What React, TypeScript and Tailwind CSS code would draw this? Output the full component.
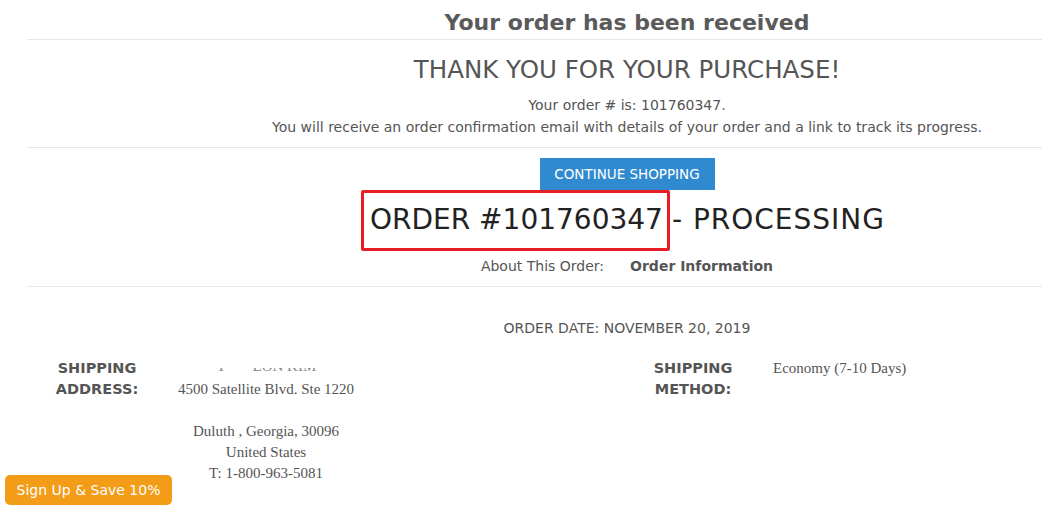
import React from "react";

const sans = { fontFamily: '"DejaVu Sans", Verdana, sans-serif' };
const serif = { fontFamily: '"Liberation Serif", Georgia, serif' };

function InfoRow({ label1, label2, children, labelWidth }: { label1: string; label2: string; children: React.ReactNode; labelWidth: string }) {
  return (
    <div className="flex items-start">
      <div className={`${labelWidth} text-center text-[14.5px] font-bold leading-[21px] text-[#555]`}>
        {label1}
        <br />
        {label2}
      </div>
      {children}
    </div>
  );
}

export default function App() {
  return (
    <div className="relative h-[513px] w-full overflow-hidden bg-white" style={sans}>
      <div className="ml-[27px] w-[1200px]">
        <h1 className="flex h-[39px] items-center justify-center pt-[5px] text-[22px] font-bold text-[#5a5a5a]">
          Your order has been received
        </h1>
        <div className="border-t border-[#e8e8e8]" />

        <div className="mt-[15px] text-center text-[24.5px] leading-[30px] text-[#555]">THANK YOU FOR YOUR PURCHASE!</div>
        <p className="mt-[9px] text-center text-[14px] leading-[22px] text-[#555]">Your order # is: 101760347.</p>
        <p className="text-center text-[14px] leading-[22px] text-[#555]">
          You will receive an order confirmation email with details of your order and a link to track its progress.
        </p>
        <div className="mt-[9px] border-t border-[#e8e8e8]" />

        <div className="mt-[10px] flex justify-center">
          <button className="h-[32px] w-[175px] bg-[#2f8ad0] text-[13.5px] text-white">CONTINUE SHOPPING</button>
        </div>

        <div className="flex h-[61px] items-stretch justify-center pr-[8px] text-[28px] text-[#222]">
          <div className="flex items-center rounded-[2px] border-[3px] border-[#e81d25] pb-[2px] pl-[6px] pr-[4px]">
            ORDER #101760347
          </div>
          <div className="flex items-center pb-[2px] pl-[2px] tracking-[1px]">- PROCESSING</div>
        </div>

        <div className="mt-[5px] flex justify-center gap-[26px] text-[14px] leading-[20px] text-[#555]">
          <span>About This Order:</span>
          <span className="font-bold">Order Information</span>
        </div>
        <div className="mt-[10px] border-t border-[#e8e8e8]" />

        <p className="mt-[31px] text-center text-[14px] leading-[20px] text-[#555]">ORDER DATE: NOVEMBER 20, 2019</p>

        <div className="mt-[20px] grid grid-cols-2">
          <div>
            <InfoRow label1="SHIPPING" label2="ADDRESS:" labelWidth="w-[140px]">
              <div className="w-[198px] text-center text-[15px] leading-[21px] text-[#555]" style={serif}>
                <div className="h-[21px] overflow-hidden">
                  <div className="mt-[10px] flex h-[7px] justify-center gap-[26px] overflow-hidden text-[#888]">
                    <span className="-mt-[12px]">Y</span>
                    <span className="-mt-[12px]">EON KIM</span>
                  </div>
                </div>
                <div>4500 Satellite Blvd. Ste 1220</div>
                <div className="h-[21px]" />
                <div>Duluth , Georgia, 30096</div>
                <div>United States</div>
                <div>T: 1-800-963-5081</div>
              </div>
            </InfoRow>
          </div>
          <div>
            <InfoRow label1="SHIPPING" label2="METHOD:" labelWidth="w-[132px]">
              <div className="pl-[14px] text-[15px] leading-[21px] text-[#555]" style={serif}>
                Economy (7-10 Days)
              </div>
            </InfoRow>
          </div>
        </div>
      </div>

      <button className="fixed bottom-[8px] left-[5px] h-[30px] w-[167px] rounded-[5px] bg-[#f39c18] text-[14px] text-white">
        Sign Up &amp; Save 10%
      </button>
    </div>
  );
}
